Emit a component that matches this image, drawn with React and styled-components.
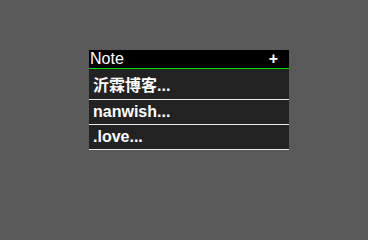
import React from 'react';
import styled, { createGlobalStyle } from 'styled-components';

const GlobalStyle = createGlobalStyle`
  html, body {
    margin: 0;
    padding: 0;
    background: #595959;
    font-family: "Liberation Sans", "Noto Sans CJK SC", sans-serif;
  }
`;

const Page = styled.div`
  width: 368px;
  height: 214px;
  display: flex;
  align-items: flex-start;
  padding: 50px 0 0 89px;
  box-sizing: border-box;
`;

const Panel = styled.div`
  width: 200px;
`;

const Header = styled.div`
  display: flex;
  justify-content: space-between;
  align-items: center;
  background: #000;
  color: #fff;
  font-size: 16px;
  line-height: 18px;
  border-bottom: 1px solid #00e000;
`;

const Title = styled.span`
  padding-left: 1px;
`;

const AddButton = styled.span`
  font-weight: bold;
  padding-right: 11px;
`;

const Item = styled.div`
  background: #222;
  color: #fff;
  font-size: 16px;
  font-weight: bold;
  padding: 3px 4px;
  border-bottom: 1px solid #e8e8e8;
`;

const notes = ['沂霖博客...', 'nanwish...', '.love...'];

export default function App() {
  return (
    <>
      <GlobalStyle />
      <Page>
        <Panel>
          <Header>
            <Title>Note</Title>
            <AddButton>+</AddButton>
          </Header>
          {notes.map((n) => (
            <Item key={n}>{n}</Item>
          ))}
        </Panel>
      </Page>
    </>
  );
}
